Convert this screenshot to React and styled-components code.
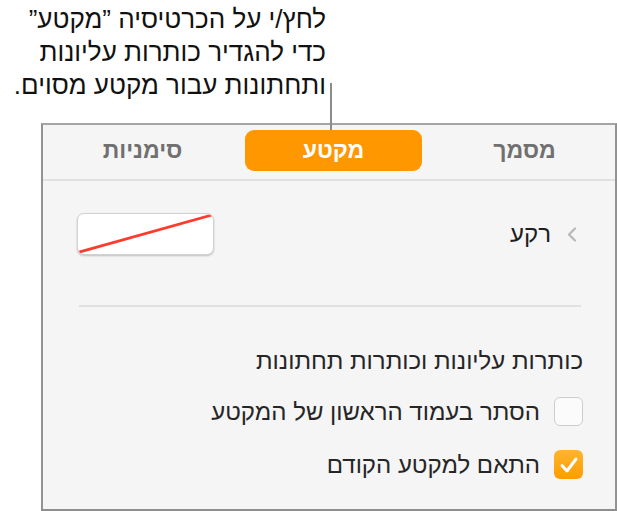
import React from "react";
import styled, { createGlobalStyle } from "styled-components";

const GlobalStyle = createGlobalStyle`
  html, body {
    margin: 0;
    padding: 0;
    background: #ffffff;
  }
  body {
    font-family: "Liberation Sans", Arial, "DejaVu Sans", sans-serif;
  }
`;

const Page = styled.div`
  position: relative;
  width: 617px;
  height: 511px;
  overflow: hidden;
`;

const Callout = styled.div`
  width: 326px;
  padding-top: 3px;
  direction: rtl;
  text-align: right;
  font-size: 26px;
  line-height: 33px;
  color: #111;
  height: 97px;
`;

const Leader = styled.div`
  position: absolute;
  left: 330px;
  top: 83px;
  width: 2px;
  height: 47px;
  background: #8c8c8c;
  z-index: 2;
`;

const Panel = styled.div`
  box-sizing: border-box;
  margin: 23px 0 0 41px;
  width: 576px;
  height: 388px;
  border: 2px solid #a5a5a5;
  border-bottom-color: #8e8e8e;
  border-left-color: #929292;
  border-right-color: #929292;
  background: #f5f5f5;
  direction: rtl;
`;

const TabBar = styled.div`
  display: grid;
  grid-template-columns: repeat(3, 177px);
  gap: 14px;
  padding: 5px 2px 0 8px;
`;

const Tab = styled.div`
  height: 41px;
  border-radius: 9px;
  display: flex;
  align-items: center;
  justify-content: center;
  font-size: 23px;
  font-weight: bold;
  color: ${(p) => (p.$active ? "#ffffff" : "#707070")};
  background: ${(p) => (p.$active ? "#ff9800" : "transparent")};
`;

const Divider = styled.div`
  height: 2px;
  background: #e1e1e1;
  margin-top: ${(p) => p.$top || 0}px;
  margin-left: ${(p) => p.$inset || 0}px;
  margin-right: ${(p) => p.$inset || 0}px;
`;

const Content = styled.div`
  padding: 0 32px 0 34px;
`;

const BackgroundRow = styled.div`
  margin-top: 32px;
  display: flex;
  align-items: center;
  justify-content: space-between;
`;

const Disclosure = styled.div`
  display: flex;
  align-items: center;
  gap: 16px;
  margin-right: 6px;
  font-size: 24px;
  color: #1e1e1e;
`;

const ColorWell = styled.div`
  box-sizing: border-box;
  width: 137px;
  height: 42px;
  border-radius: 7px;
  background: #ffffff;
  border: 1px solid #d2d2d2;
  box-shadow: 0 1px 2px rgba(0, 0, 0, 0.22);
  overflow: hidden;
  svg {
    display: block;
    width: 100%;
    height: 100%;
  }
`;

const SectionTitle = styled.div`
  margin-top: 42px;
  font-size: 24px;
  line-height: 24px;
  color: #262626;
`;

const CheckRow = styled.div`
  display: flex;
  align-items: center;
  gap: 14px;
  height: 29px;
  margin-top: ${(p) => p.$top}px;
  font-size: 24px;
  color: #262626;
`;

const Box = styled.div`
  box-sizing: border-box;
  flex: none;
  width: 29px;
  height: 29px;
  border-radius: 6px;
  border: ${(p) => (p.$checked ? "none" : "1.5px solid #cdcdcd")};
  background: ${(p) =>
    p.$checked ? "linear-gradient(#ffb52e, #ff9c00)" : "#fbfbfb"};
  display: flex;
  align-items: center;
  justify-content: center;
`;

const Chevron = () => (
  <svg width="10" height="15" viewBox="0 0 10 15">
    <polyline
      points="8,1.5 2,7.5 8,13.5"
      fill="none"
      stroke="#b8b8b8"
      strokeWidth="2.2"
      strokeLinecap="round"
      strokeLinejoin="round"
    />
  </svg>
);

const Check = () => (
  <svg width="20" height="18" viewBox="0 0 20 18">
    <path
      d="M3 9.5 L8 15 L17 3"
      fill="none"
      stroke="#ffffff"
      strokeWidth="3"
      strokeLinecap="round"
      strokeLinejoin="round"
    />
  </svg>
);

export default function App() {
  return (
    <>
      <GlobalStyle />
      <Page>
        <Callout>
          לחץ/י על הכרטיסיה ”מקטע”
          <br />
          כדי להגדיר כותרות עליונות
          <br />
          ותחתונות עבור מקטע מסוים.
        </Callout>
        <Leader />
        <Panel>
          <TabBar>
            <Tab>מסמך</Tab>
            <Tab $active>מקטע</Tab>
            <Tab>סימניות</Tab>
          </TabBar>
          <Divider $top={8} />
          <Content>
            <BackgroundRow>
              <Disclosure>
                <Chevron />
                <span>רקע</span>
              </Disclosure>
              <ColorWell>
                <svg viewBox="0 0 137 42" preserveAspectRatio="none">
                  <line x1="1" y1="40" x2="136" y2="1" stroke="#ff3b30" strokeWidth="2.8" />
                </svg>
              </ColorWell>
            </BackgroundRow>
            <Divider $top={50} $inset={2} />
            <SectionTitle>כותרות עליונות וכותרות תחתונות</SectionTitle>
            <CheckRow $top={24}>
              <Box />
              <span>הסתר בעמוד הראשון של המקטע</span>
            </CheckRow>
            <CheckRow $top={24}>
              <Box $checked>
                <Check />
              </Box>
              <span>התאם למקטע הקודם</span>
            </CheckRow>
          </Content>
        </Panel>
      </Page>
    </>
  );
}
